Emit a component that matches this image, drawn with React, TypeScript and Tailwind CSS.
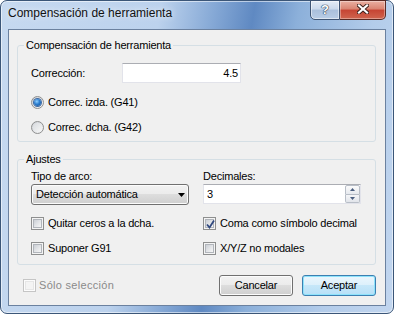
import React from 'react';

function Check({ checked = false, disabled = false }: { checked?: boolean; disabled?: boolean }) {
  return (
    <span
      className={`relative flex h-[13px] w-[13px] shrink-0 items-center justify-center border ${
        disabled ? 'border-[#c5c5c5] bg-[#fcfcfc]' : 'border-[#8e8f8f] bg-[#f4f4f4]'
      }`}
    >
      <span
        className={`h-[9px] w-[9px] border ${
          disabled
            ? 'border-[#e6e6e6] bg-[#f4f4f4]'
            : 'border-[#b1b5bb] bg-[linear-gradient(135deg,#cbcfd5_0%,#e2e4e7_50%,#f6f6f6_100%)]'
        }`}
      />
      {checked && (
        <svg className="absolute left-[1px] top-[1px]" width="11" height="11" viewBox="0 0 11 11">
          <path d="M2 5.5 L4.5 8.5 L9 1.5" fill="none" stroke="#31497f" strokeWidth="1.8" />
        </svg>
      )}
    </span>
  );
}

function Radio({ checked = false }: { checked?: boolean }) {
  return (
    <span className="flex h-[13px] w-[13px] shrink-0 items-center justify-center rounded-full border border-[#8e8f8f] bg-[linear-gradient(135deg,#cdd0d5,#f7f7f7)]">
      {checked ? (
        <span className="h-[7px] w-[7px] rounded-full bg-[radial-gradient(circle_at_40%_35%,#8fd0ff_0%,#2c7ed0_45%,#0f4a8c_100%)] shadow-[0_0_0_1px_#3f6aa3]" />
      ) : (
        <span className="h-[9px] w-[9px] rounded-full bg-[linear-gradient(135deg,#d9dce0,#f6f6f6)]" />
      )}
    </span>
  );
}

function Group({ title, children }: { title: string; children: React.ReactNode }) {
  return (
    <fieldset className="rounded-[3px] border border-[#d5dfe5]">
      <legend className="ml-[6px] px-[2px] leading-[13px]">{title}</legend>
      {children}
    </fieldset>
  );
}

function Button({ label, primary = false }: { label: string; primary?: boolean }) {
  return (
    <div
      className={`flex h-[21px] w-[74px] items-center justify-center rounded-[3px] border ${
        primary
          ? 'border-[#3c7fb1] bg-[linear-gradient(180deg,#ebf6fd_0%,#dcf0fb_50%,#c6e7f9_50%,#b7e0f7_100%)] shadow-[inset_0_0_0_1px_#8ee3fb]'
          : 'border-[#707070] bg-[linear-gradient(180deg,#f2f2f2_0%,#ebebeb_50%,#dddddd_50%,#cfcfcf_100%)] shadow-[inset_0_0_0_1px_#fcfcfc]'
      }`}
    >
      {label}
    </div>
  );
}

export default function App() {
  return (
    <div className="h-[314px] w-[394px] overflow-hidden bg-white font-['Liberation_Sans',Arial,sans-serif] text-[11px] tracking-[-0.2px] text-black">
      <div className="flex h-full w-full flex-col rounded-[7px] border border-[#3b5678] bg-[linear-gradient(100deg,#c6d9f0_0%,#bcd2ed_36%,#86a9d6_48%,#5f89c2_57%,#8cb0da_67%,#b3ccea_84%,#c2d6ef_100%)] px-[7px] pb-[7px] shadow-[inset_0_0_0_1px_rgba(255,255,255,0.55)]">
        {/* title bar */}
        <div className="flex h-[28px] items-start">
          <div className="pt-[5px] text-[12px] leading-[15px] tracking-normal text-[#111] [text-shadow:0_0_6px_rgba(255,255,255,0.9)]">
            Compensación de herramienta
          </div>
          <div className="-mt-px ml-auto flex">
            <div className="flex h-[20px] w-[30px] items-center justify-center rounded-bl-[5px] border border-[#3f5574] bg-[linear-gradient(180deg,#e4ecf6_0%,#cbd9ec_45%,#aac0dc_50%,#b9cde6_100%)] pb-[2px] shadow-[inset_0_0_0_1px_rgba(255,255,255,0.5)]">
              <span className="text-[13px] font-bold leading-[13px] tracking-normal text-white [text-shadow:0_0_1px_#23344e,0_0_1px_#23344e,0_0_1px_#23344e]">
                ?
              </span>
            </div>
            <div className="flex h-[20px] w-[46px] items-center justify-center rounded-br-[5px] border border-l-0 border-[#5a2a24] bg-[linear-gradient(180deg,#eab0a2_0%,#d98371_45%,#c64433_50%,#d0654f_100%)] pb-[2px] shadow-[inset_0_0_0_1px_rgba(255,255,255,0.35)]">
              <svg width="12" height="10" viewBox="0 0 12 10">
                <path d="M2 1.5 L10 8.5 M10 1.5 L2 8.5" stroke="#3a1f1a" strokeWidth="4" strokeLinecap="square" />
                <path d="M2 1.5 L10 8.5 M10 1.5 L2 8.5" stroke="#ffffff" strokeWidth="2.2" strokeLinecap="square" />
              </svg>
            </div>
          </div>
        </div>

        {/* client area */}
        <div className="flex flex-1 flex-col border border-[#6b819f] bg-[#f0f0f0] pt-[9px]">
          <div className="ml-[8px] mr-[9px] flex flex-col gap-[11px]">
            <Group title="Compensación de herramienta">
              <div className="pb-[7px] pl-[13px]">
                <div className="mt-[11px] flex h-[20px] items-center">
                  <span className="w-[91px]">Corrección:</span>
                  <div className="flex h-[20px] w-[119px] items-center justify-end border border-[#e2e3ea] border-t-[#abadb3] bg-white pr-[2px]">
                    4.5
                  </div>
                </div>
                <div className="mt-[13px] flex h-[13px] items-center gap-[4px]">
                  <Radio checked />
                  <span>Correc. izda. (G41)</span>
                </div>
                <div className="mt-[12px] flex h-[13px] items-center gap-[4px]">
                  <Radio />
                  <span>Correc. dcha. (G42)</span>
                </div>
              </div>
            </Group>

            <Group title="Ajustes">
              <div className="flex gap-[14px] pb-[9px] pl-[13px] pt-[4px]">
                <div className="flex w-[158px] flex-col">
                  <div className="leading-[13px]">Tipo de arco:</div>
                  <div className="mt-[1px] flex h-[21px] items-center justify-between rounded-[3px] border border-[#707070] bg-[linear-gradient(180deg,#f2f2f2_0%,#ebebeb_50%,#dddddd_50%,#cfcfcf_100%)] pl-[4px] pr-[3px] shadow-[inset_0_0_0_1px_#fcfcfc]">
                    <span>Detección automática</span>
                    <svg width="7" height="4" viewBox="0 0 7 4">
                      <path d="M0 0 H7 L3.5 4 Z" fill="#000" />
                    </svg>
                  </div>
                  <div className="mt-[12px] flex h-[13px] items-center gap-[4px]">
                    <Check />
                    <span>Quitar ceros a la dcha.</span>
                  </div>
                  <div className="mt-[12px] flex h-[13px] items-center gap-[4px]">
                    <Check />
                    <span>Suponer G91</span>
                  </div>
                </div>
                <div className="flex w-[158px] flex-col">
                  <div className="leading-[13px]">Decimales:</div>
                  <div className="mt-[1px] h-[21px]">
                    <div className="flex h-[20px] items-center border border-[#e2e3ea] border-t-[#abadb3] bg-white pl-[3px]">
                      <span className="flex-1">3</span>
                      <div className="flex h-[18px] w-[15px] flex-col">
                        <div className="flex flex-1 items-center justify-center rounded-t-[2px] border border-[#b8bec7] bg-[linear-gradient(180deg,#fbfbfb,#e6e9ee)]">
                          <svg width="5" height="3" viewBox="0 0 5 3">
                            <path d="M0 3 H5 L2.5 0 Z" fill="#4b5f80" />
                          </svg>
                        </div>
                        <div className="flex flex-1 items-center justify-center rounded-b-[2px] border border-t-0 border-[#b8bec7] bg-[linear-gradient(180deg,#f5f6f8,#e1e4ea)]">
                          <svg width="5" height="3" viewBox="0 0 5 3">
                            <path d="M0 0 H5 L2.5 3 Z" fill="#4b5f80" />
                          </svg>
                        </div>
                      </div>
                    </div>
                  </div>
                  <div className="mt-[12px] flex h-[13px] items-center gap-[4px]">
                    <Check checked />
                    <span>Coma como símbolo decimal</span>
                  </div>
                  <div className="mt-[12px] flex h-[13px] items-center gap-[4px]">
                    <Check />
                    <span>X/Y/Z no modales</span>
                  </div>
                </div>
              </div>
            </Group>
          </div>

          <div className="mt-[10px] flex items-center pl-[14px] pr-[9px]">
            <div className="flex items-center gap-[3px] text-[#8a8a8a] tracking-[0.3px]">
              <Check disabled />
              <span>Sólo selección</span>
            </div>
            <div className="ml-auto flex gap-[9px]">
              <Button label="Cancelar" />
              <Button label="Aceptar" primary />
            </div>
          </div>
        </div>
      </div>
    </div>
  );
}
